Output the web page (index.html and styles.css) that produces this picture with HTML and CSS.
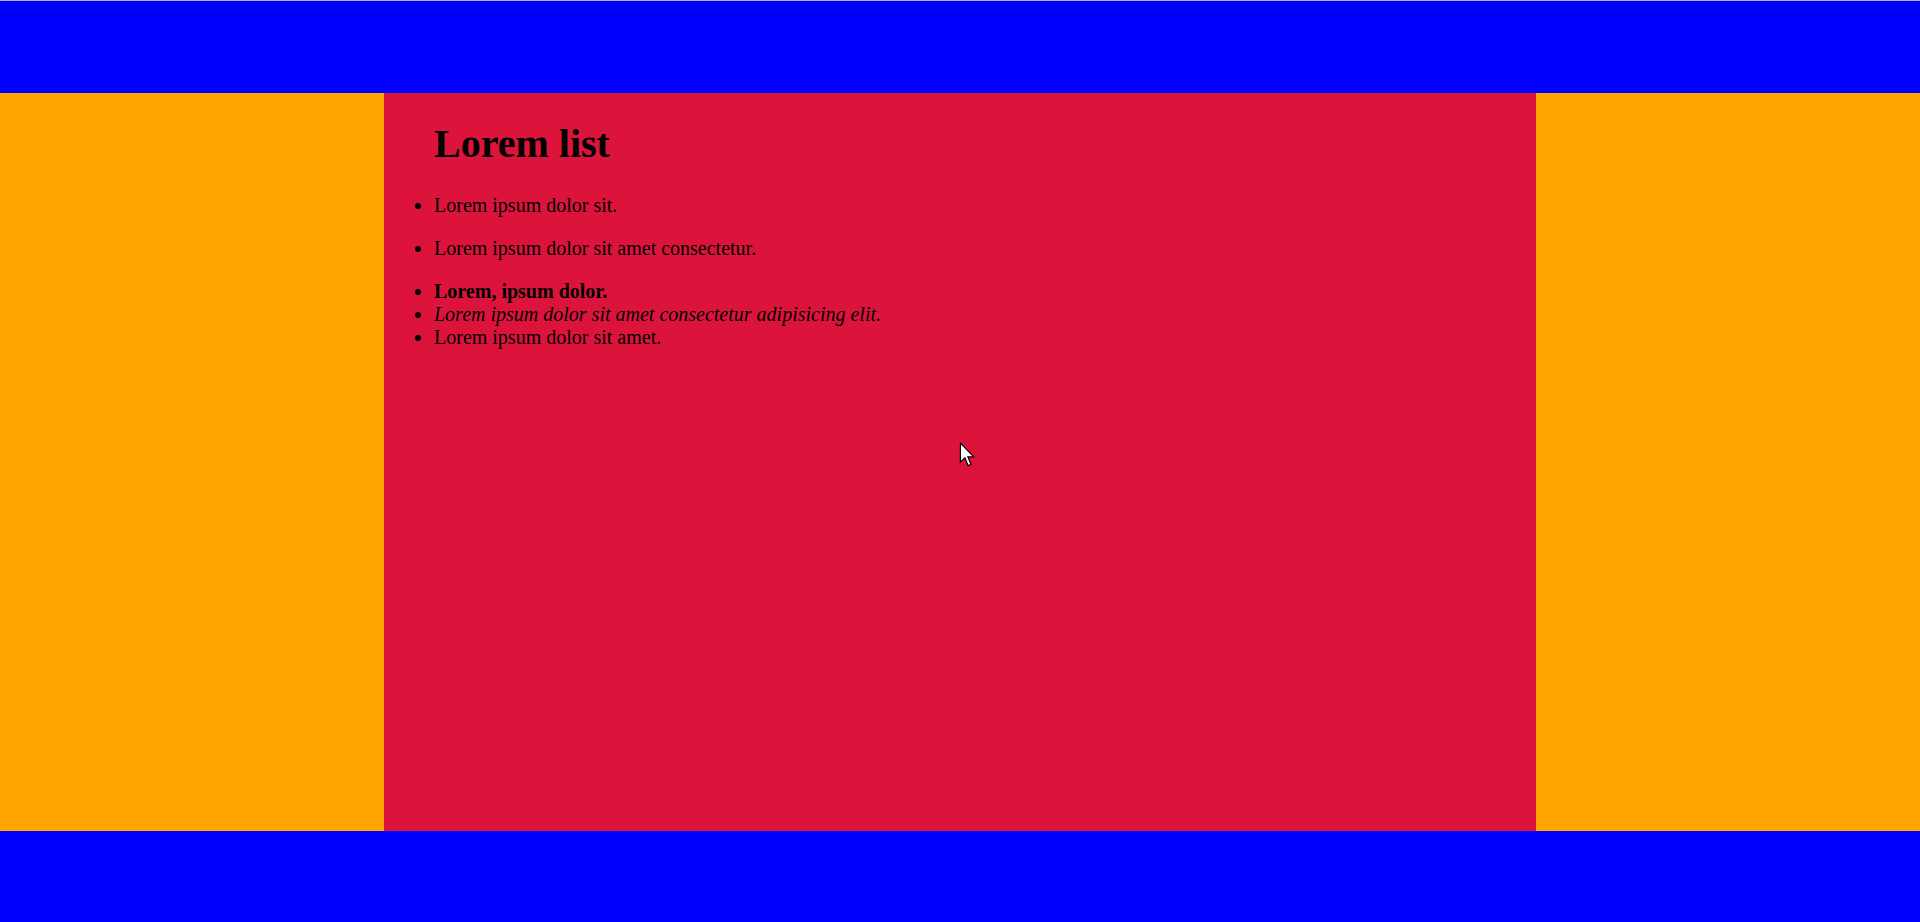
FILE: index.html
```html
<!DOCTYPE html>
<html lang="en">
<head>
<meta charset="utf-8">
<title>Lorem list</title>
<link rel="stylesheet" href="styles.css">
</head>
<body>
<div class="page">
  <header class="header"></header>
  <aside class="side side-left"></aside>
  <main class="main">
    <h1 class="title">Lorem list</h1>
    <ul class="list">
      <li class="item spaced">Lorem ipsum dolor sit.</li>
      <li class="item spaced">Lorem ipsum dolor sit amet consectetur.</li>
      <li class="item"><strong>Lorem, ipsum dolor.</strong></li>
      <li class="item"><em>Lorem ipsum dolor sit amet consectetur adipisicing elit.</em></li>
      <li class="item">Lorem ipsum dolor sit amet.</li>
    </ul>
  </main>
  <aside class="side side-right"></aside>
  <footer class="footer"></footer>
</div>
<svg class="cursor" width="17" height="26" viewBox="0 0 14 22" aria-hidden="true">
  <path d="M1 1 L1 17 L4.8 13.4 L7.6 20 L10 19 L7.3 12.6 L12.3 12.6 Z" fill="#fff" stroke="#000" stroke-width="1" stroke-linejoin="miter"/>
</svg>
</body>
</html>
```

FILE: styles.css
```css
html, body {
  margin: 0;
  padding: 0;
  height: 100%;
}

body {
  font-family: "Liberation Serif", "Times New Roman", serif;
  font-size: 20px;
  color: #000;
  overflow: hidden;
}

.page {
  display: grid;
  grid-template-columns: 384px 1152px 384px;
  grid-template-rows: 93px 738px 91px;
  height: 922px;
  width: 1920px;
}

.header {
  grid-column: 1 / 4;
  background: #0000ff;
  border-top: 1px solid #b4b4c4;
}

.footer {
  grid-column: 1 / 4;
  background: #0000ff;
}

.side {
  background: #ffa500;
}

.main {
  background: #dc143c;
  padding-left: 50px;
  display: flow-root;
}

.title {
  font-size: 40px;
  font-weight: bold;
  margin: 27px 0;
}

.list {
  margin: 20px 0;
  padding: 0;
  list-style: disc outside;
}

.item.spaced {
  margin-bottom: 20px;
}

.cursor {
  position: absolute;
  left: 959px;
  top: 442px;
}
```
